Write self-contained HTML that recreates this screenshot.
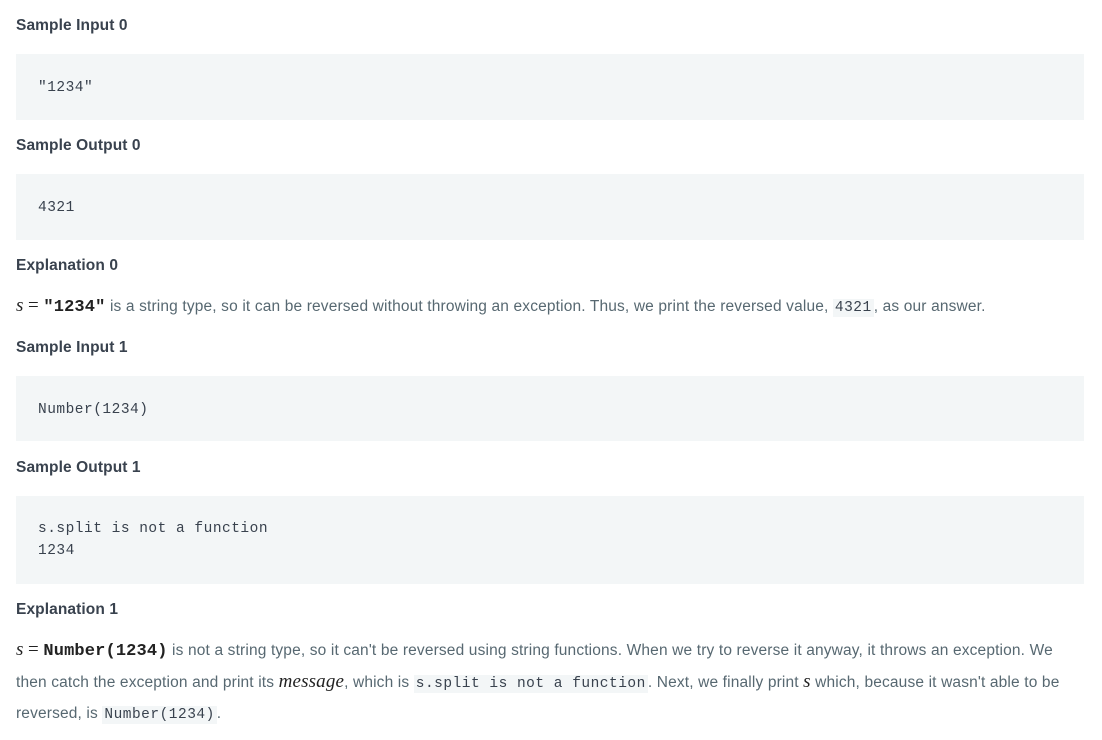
<!DOCTYPE html>
<html><head><meta charset="utf-8"><style>
body{margin:0;width:1102px;height:740px;background:#fff;font-family:"Liberation Sans",sans-serif;position:relative;overflow:hidden}
.h{position:absolute;left:16px;font-weight:bold;font-size:15.5px;color:#39424e;line-height:20px;letter-spacing:0.1px}
.box{position:absolute;left:16px;width:1068px;background:#f3f6f7}
.box pre{margin:0;position:absolute;left:22px;font-family:"Liberation Mono",monospace;font-size:14.5px;letter-spacing:0.5px;color:#39424e;line-height:22px}
.p{position:absolute;left:16px;width:1070px;font-size:15.5px;letter-spacing:0.15px;color:#576871;line-height:30px}
code{font-family:"Liberation Mono",monospace;font-size:14.5px;letter-spacing:0.5px;background:#f3f6f7;color:#39424e;padding:1px 2px}
.m{font-family:"Liberation Serif",serif;font-style:italic;font-size:19px;color:#222}
.e{font-family:"Liberation Serif",serif;font-size:19px;color:#222}
.b{font-family:"Liberation Mono",monospace;font-weight:bold;font-size:17px;color:#222}
</style></head><body>
<div class="h" style="top:16px">Sample Input 0</div>
<div class="box" style="top:54px;height:66px"><pre style="top:23px">"1234"</pre></div>
<div class="h" style="top:136px">Sample Output 0</div>
<div class="box" style="top:174px;height:66px"><pre style="top:23px">4321</pre></div>
<div class="h" style="top:256px">Explanation 0</div>
<div class="p" style="top:291px"><span class="m">s</span> <span class="e">=</span> <span class="b">"1234"</span> is a string type, so it can be reversed without throwing an exception. Thus, we print the reversed value, <code>4321</code>, as our answer.</div>
<div class="h" style="top:338px">Sample Input 1</div>
<div class="box" style="top:376px;height:65px"><pre style="top:23px">Number(1234)</pre></div>
<div class="h" style="top:458px">Sample Output 1</div>
<div class="box" style="top:496px;height:88px"><pre style="top:22px">s.split is not a function
1234</pre></div>
<div class="h" style="top:600px">Explanation 1</div>
<div class="p" style="top:635px"><span class="m">s</span> <span class="e">=</span> <span class="b">Number(1234)</span> is not a string type, so it can't be reversed using string functions. When we try to reverse it anyway, it throws an exception. We<br>then catch the exception and print its <span class="m">message</span>, which is <code>s.split is not a function</code>. Next, we finally print <span class="m">s</span> which, because it wasn't able to be<br>reversed, is <code>Number(1234)</code>.</div>
</body></html>
